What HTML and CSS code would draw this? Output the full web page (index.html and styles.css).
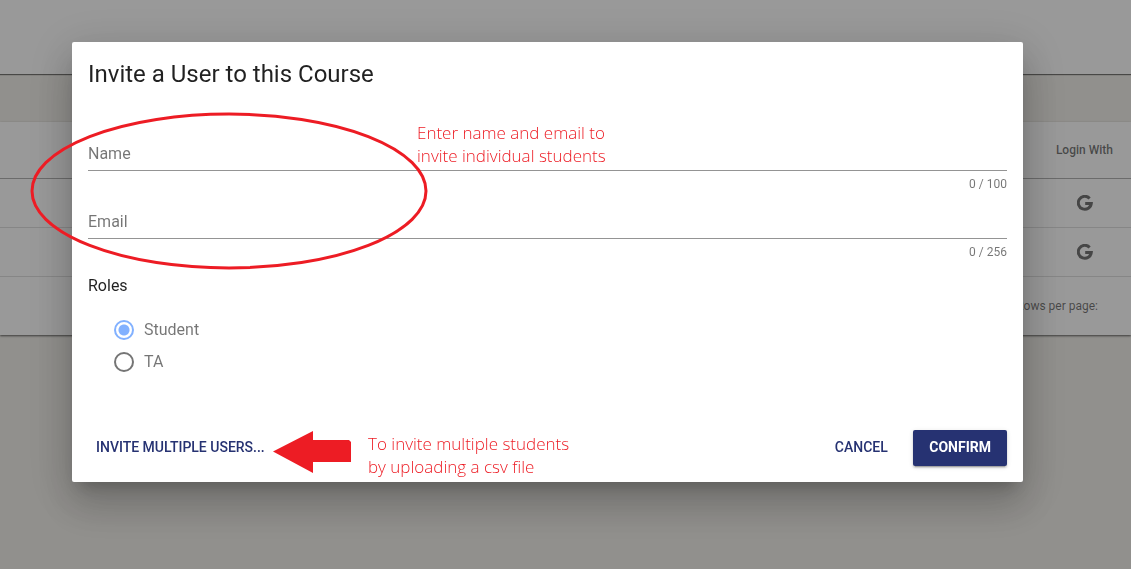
FILE: index.html
```html
<!DOCTYPE html>
<html lang="en">
<head>
    <meta charset="UTF-8">
    <meta name="viewport" content="width=device-width, initial-scale=1.0">
    <title>Invite a User</title>
    <link rel="stylesheet" href="styles.css">
</head>
<body>
    <header class="toolbar"></header>

    <main class="page">
        <table class="users">
            <thead>
                <tr><th>Login With</th></tr>
            </thead>
            <tbody>
                <tr>
                    <td>
                        <svg class="google" viewBox="0 0 16 16" role="img" aria-label="Google"><path d="M12.6 3.4A6.500 6.500 0 1 0 14.300 8.400H8.200" /></svg>
                    </td>
                </tr>
                <tr>
                    <td>
                        <svg class="google" viewBox="0 0 16 16" role="img" aria-label="Google"><path d="M12.6 3.4A6.500 6.500 0 1 0 14.300 8.400H8.200" /></svg>
                    </td>
                </tr>
            </tbody>
            <tfoot>
                <tr><td>Rows per page:</td></tr>
            </tfoot>
        </table>
    </main>

    <div class="overlay">
        <form class="dialog" role="dialog" aria-labelledby="dialog-title">
            <h1 id="dialog-title">Invite a User to this Course</h1>

            <div class="fields">
                <div class="field">
                    <label for="name">Name</label>
                    <input type="text" id="name" name="name" maxlength="100">
                    <span class="counter">0 / 100</span>
                </div>
                <div class="field">
                    <label for="email">Email</label>
                    <input type="email" id="email" name="email" maxlength="256">
                    <span class="counter">0 / 256</span>
                </div>
            </div>

            <fieldset class="roles">
                <legend>Roles</legend>
                <div class="role">
                    <input type="radio" id="student" name="role" value="student" checked>
                    <label for="student">Student</label>
                </div>
                <div class="role">
                    <input type="radio" id="ta" name="role" value="ta">
                    <label for="ta">TA</label>
                </div>
            </fieldset>

            <div class="actions">
                <button type="button" class="btn btn-multiple">Invite multiple users...</button>
                <button type="button" class="btn">Cancel</button>
                <button type="submit" class="btn btn-confirm">Confirm</button>
            </div>

            <!-- Help notes drawn over the dialog -->
            <svg class="note-circle" viewBox="0 0 398 158" aria-hidden="true"><ellipse cx="199" cy="79" rx="197" ry="77" /></svg>
            <p class="note note-fields">Enter name and email to<br>invite individual students</p>
            <svg class="note-arrow" viewBox="0 0 78 42" aria-hidden="true"><path d="M0 20.500 40 0v9h36l2 2v20H40v11z" /></svg>
            <p class="note note-upload">To invite multiple students<br>by uploading a csv file</p>
        </form>
    </div>
</body>
</html>
```

FILE: styles.css
```css
:root {
    --primary-color: #263272;
    --accent-color: #82b1ff;
    --page-color: #f2f0eb;
    --note-color: #ed1c24;
    --text-dark: rgba(0, 0, 0, 0.87);
    --text-light: rgba(0, 0, 0, 0.54);
}

* {
    margin: 0;
    padding: 0;
    box-sizing: border-box;
}

body {
    min-height: 100vh;
    background: var(--page-color);
    color: var(--text-dark);
    font-family: Roboto, sans-serif;
    font-size: 16px;
}

.toolbar {
    height: 74px;
    background: #fff;
    box-shadow: 0 1px 1px rgba(0, 0, 0, 0.5);
}

.page {
    padding-top: 48px;
}

/* Table behind the dialog */
.users {
    width: 100%;
    border-collapse: collapse;
    background: #fff;
    box-shadow: 0 1px 2px rgba(0, 0, 0, 0.6);
    color: var(--text-light);
    font-size: 12px;
    text-align: right;
}

.users th {
    height: 56px;
    padding-right: 18px;
    font-weight: 500;
}

.users td {
    height: 49px;
    padding-right: 38px;
    border-top: 1px solid rgba(0, 0, 0, 0.12);
}

.users tbody tr:first-child td {
    border-top-color: rgba(0, 0, 0, 0.3);
}

.users tfoot td {
    height: 59px;
    padding-right: 33px;
}

.google {
    width: 16px;
    height: 16px;
    vertical-align: middle;
    fill: none;
    stroke: #757575;
    stroke-width: 3;
}

.overlay {
    position: fixed;
    inset: 0;
    padding: 42px 108px 0 72px;
    background: rgba(0, 0, 0, 0.4);
}

.dialog {
    position: relative;
    padding: 16px;
    background: #fff;
    border-radius: 2px;
    box-shadow: 0 11px 15px -7px rgba(0, 0, 0, 0.2),
        0 24px 38px 3px rgba(0, 0, 0, 0.14),
        0 9px 46px 8px rgba(0, 0, 0, 0.12);
}

h1 {
    font-size: 24px;
    font-weight: 400;
    line-height: 32px;
}

.fields {
    display: grid;
    gap: 14px;
    margin-top: 47px;
}

/* The label sits on the same grid cell as its input */
.field {
    display: grid;
}

.field label,
.field input {
    grid-area: 1 / 1;
}

.field label {
    color: var(--text-light);
    line-height: 34px;
}

.field input {
    height: 34px;
    border: none;
    border-bottom: 1px solid rgba(0, 0, 0, 0.42);
    background: transparent;
    font: inherit;
    outline: none;
}

.counter {
    margin-top: 6px;
    color: var(--text-light);
    font-size: 12px;
    line-height: 14px;
    text-align: right;
}

.roles {
    display: grid;
    gap: 12px;
    margin-top: 17px;
    border: none;
}

.roles legend {
    margin-bottom: 24px;
    line-height: 20px;
}

.role {
    display: flex;
    align-items: center;
    gap: 10px;
    padding-left: 26px;
    color: var(--text-light);
    line-height: 20px;
}

.role input {
    appearance: none;
    width: 20px;
    height: 20px;
    border: 2px solid #757575;
    border-radius: 50%;
}

.role input:checked {
    border-color: var(--accent-color);
    background: radial-gradient(circle, var(--accent-color) 5px, transparent 6px);
}

.actions {
    display: flex;
    gap: 8px;
    margin-top: 58px;
}

.btn {
    min-width: 88px;
    height: 36px;
    padding: 0 16px 2px;
    border: none;
    border-radius: 2px;
    background: transparent;
    color: var(--primary-color);
    font-family: inherit;
    font-size: 14px;
    font-weight: 500;
    text-transform: uppercase;
    cursor: pointer;
}

.btn-multiple {
    margin-right: auto;
    padding: 0 8px 2px;
}

.btn-confirm {
    background: var(--primary-color);
    color: #fff;
    font-weight: 700;
    box-shadow: 0 3px 1px -2px rgba(0, 0, 0, 0.2),
        0 2px 2px rgba(0, 0, 0, 0.14),
        0 1px 5px rgba(0, 0, 0, 0.12);
}

.note {
    position: absolute;
    color: var(--note-color);
    font-family: "Open Sans", sans-serif;
    font-size: 17px;
    font-weight: 300;
    line-height: 23px;
    white-space: nowrap;
}

.note-fields {
    top: 79px;
    left: 345px;
}

.note-upload {
    top: 390px;
    left: 296px;
}

.note-circle {
    position: absolute;
    top: 70px;
    left: -42px;
    width: 398px;
    height: 158px;
    fill: none;
    stroke: var(--note-color);
    stroke-width: 3;
    overflow: visible;
    pointer-events: none;
}

.note-arrow {
    position: absolute;
    top: 389px;
    left: 201px;
    width: 78px;
    height: 42px;
    fill: var(--note-color);
}
```
